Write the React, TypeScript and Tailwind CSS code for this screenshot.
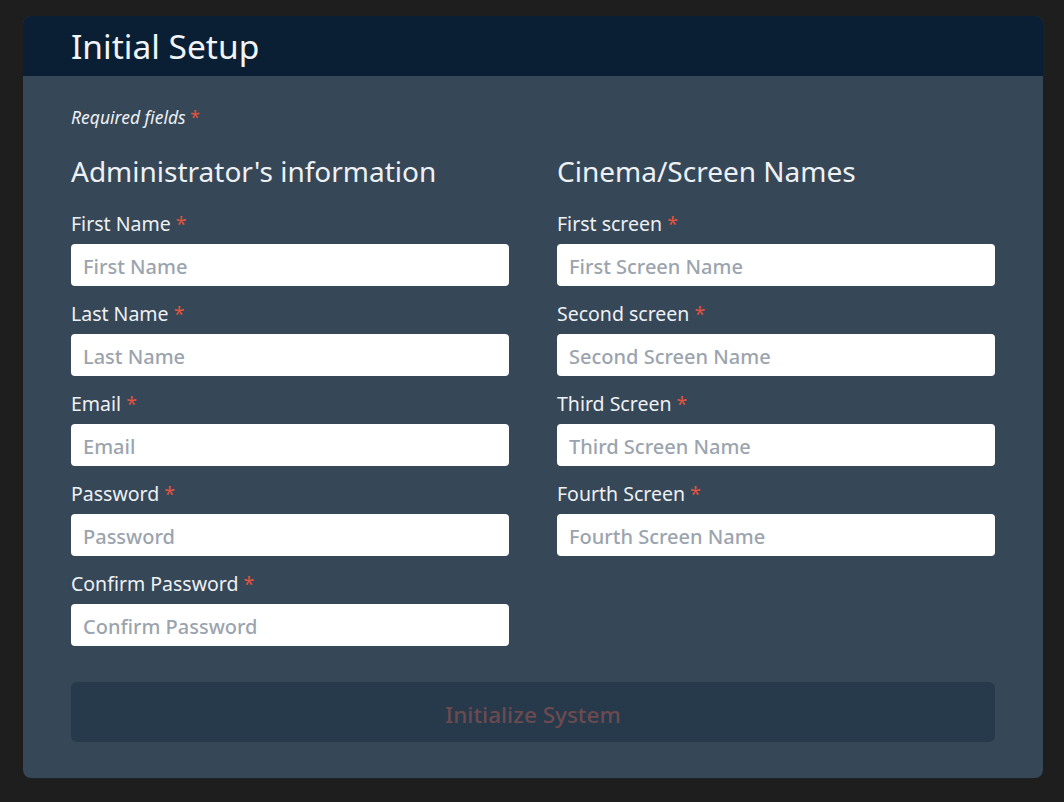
import React from "react";

const adminFields = [
  { label: "First Name", placeholder: "First Name", type: "text" },
  { label: "Last Name", placeholder: "Last Name", type: "text" },
  { label: "Email", placeholder: "Email", type: "email" },
  { label: "Password", placeholder: "Password", type: "password" },
  { label: "Confirm Password", placeholder: "Confirm Password", type: "password" },
];

const screenFields = [
  { label: "First screen", placeholder: "First Screen Name" },
  { label: "Second screen", placeholder: "Second Screen Name" },
  { label: "Third Screen", placeholder: "Third Screen Name" },
  { label: "Fourth Screen", placeholder: "Fourth Screen Name" },
];

function Field({
  label,
  placeholder,
  type = "text",
}: {
  label: string;
  placeholder: string;
  type?: string;
}) {
  return (
    <div className="mb-[14px]">
      <label className="block text-[19.5px] leading-[28px] text-[#eef1f4] mb-[6px]">
        {label} <span className="text-[#e2543f]">*</span>
      </label>
      <input
        type={type}
        placeholder={placeholder}
        className="block w-full h-[42px] rounded-[4px] bg-white px-3 pt-[2px] text-[20px] font-medium text-gray-800 placeholder:text-[#9ba4ae] outline-none"
      />
    </div>
  );
}

export default function App() {
  return (
    <div
      className="min-h-screen bg-[#1e1e1e] pt-4 pb-6"
      style={{ fontFamily: '"Noto Sans", "Open Sans", sans-serif' }}
    >
      <div className="ml-[23px] w-[1020px] rounded-lg overflow-hidden bg-[#364757]">
        {/* HEADER */}
        <div className="h-[60px] bg-[#0a1f33] px-12 flex items-center">
          <h1 className="text-[33.5px] leading-none text-[#f2f5f8] mt-[2px]">Initial Setup</h1>
        </div>

        {/* BODY */}
        <div className="px-12 pt-[29px] pb-9">
          <p className="text-[17.5px] leading-[24px] italic text-[#eef1f4]">
            Required fields <span className="text-[#e2543f] not-italic">*</span>
          </p>

          <div className="grid grid-cols-2 gap-12 mt-[24px]">
            <div>
              <h2 className="text-[28px] leading-[36px] text-[#eef1f4] mb-[21px]">
                Administrator's information
              </h2>
              {adminFields.map((f) => (
                <Field key={f.label} label={f.label} placeholder={f.placeholder} type={f.type} />
              ))}
            </div>
            <div>
              <h2 className="text-[28px] leading-[36px] text-[#eef1f4] mb-[21px]">
                Cinema/Screen Names
              </h2>
              {screenFields.map((f) => (
                <Field key={f.label} label={f.label} placeholder={f.placeholder} />
              ))}
            </div>
          </div>

          {/* SUBMIT */}
          <button
            type="button"
            disabled
            className="mt-[22px] w-full h-[60px] pt-[5px] rounded-md bg-[#263a4b] text-[22.5px] font-medium text-[#6d4a50]"
          >
            Initialize System
          </button>
        </div>
      </div>
    </div>
  );
}
